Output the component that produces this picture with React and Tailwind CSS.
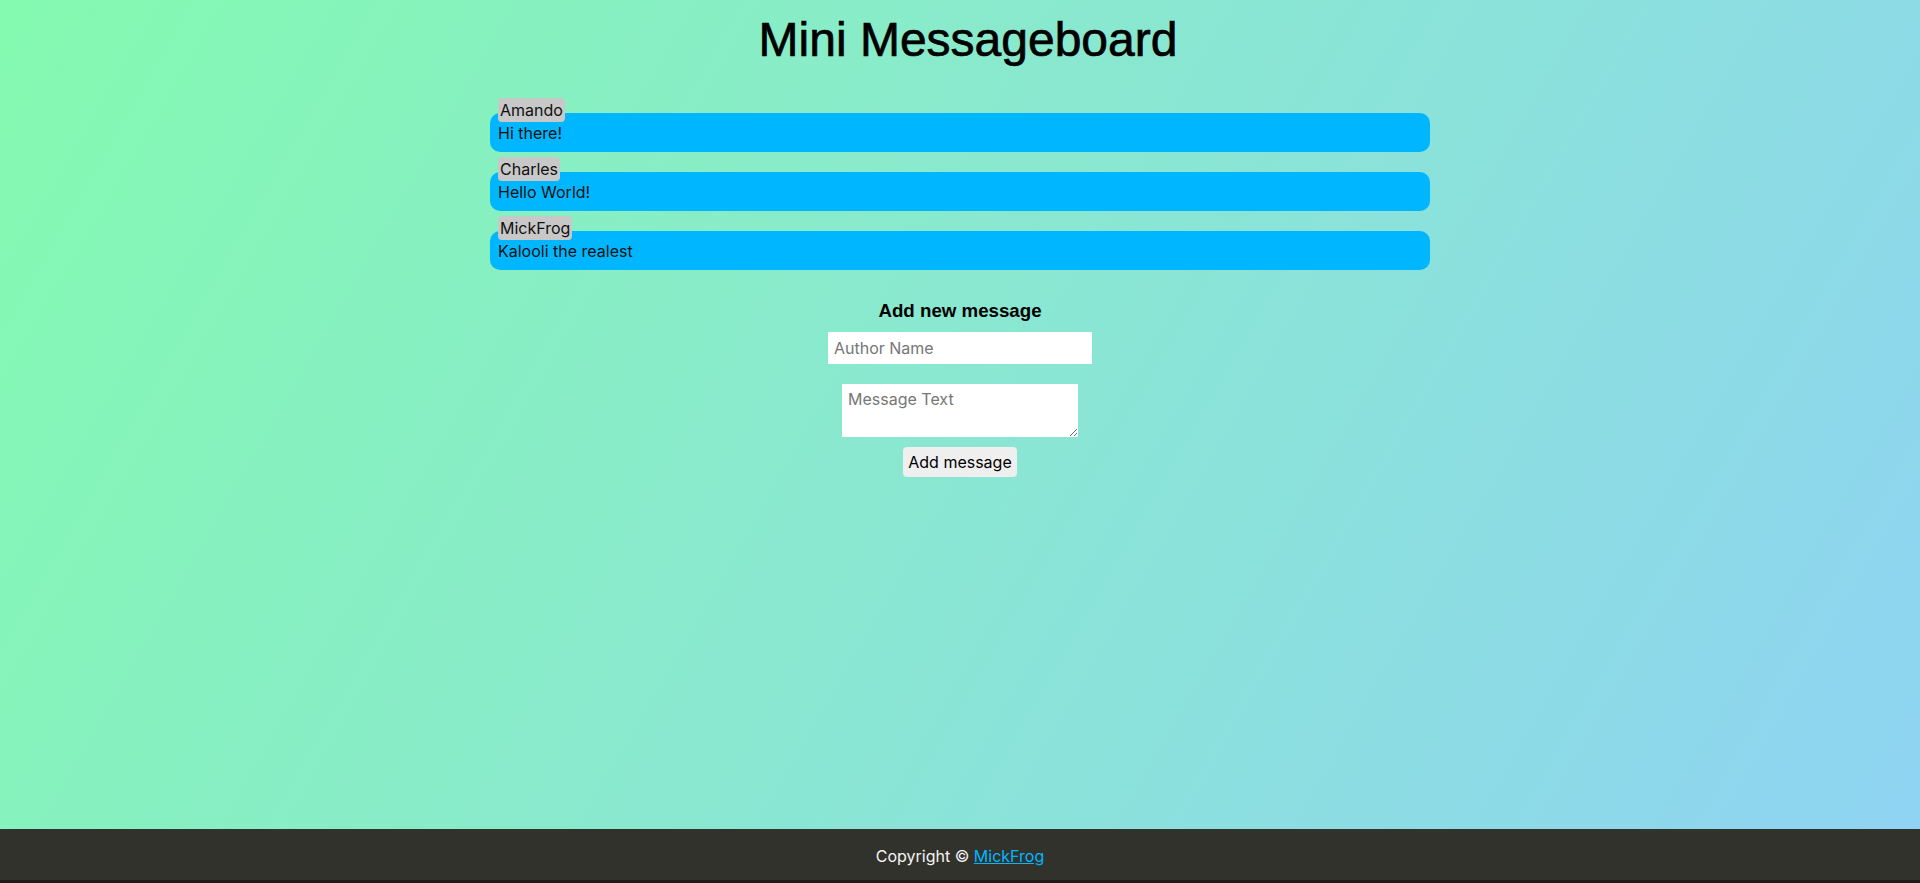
import React, { useState } from "react";

const initialMessages = [
  { user: "Amando", text: "Hi there!" },
  { user: "Charles", text: "Hello World!" },
  { user: "MickFrog", text: "Kalooli the realest" },
];

function Message({ user, text }) {
  return (
    <div className="flex flex-col items-start">
      <span className="relative z-10 ml-2 h-6 px-[2px] leading-6 rounded bg-[#c8c8c8] text-[#111]">
        {user}
      </span>
      <div className="w-full -mt-[9px] pt-[8px] pb-[7px] pl-2 rounded-[10px] bg-[#00b7ff] leading-6 text-[#111]">
        {text}
      </div>
    </div>
  );
}

export default function App() {
  const [messages] = useState(initialMessages);

  return (
    <div className="min-h-[883px] flex flex-col font-['Inter',sans-serif] text-base text-black bg-[linear-gradient(120deg,#84fab0_0%,#8fd3f4_100%)]">
      <main className="flex-1 flex flex-col items-center">
        <h1 className="pt-4 ml-4 font-['Liberation_Sans',Arial,sans-serif] text-[48px] leading-[48px] font-normal [-webkit-text-stroke:0.7px_black]">
          Mini Messageboard
        </h1>

        {/* Messages */}
        <div className="mt-[34px] w-[940px] flex flex-col gap-[5px]">
          {messages.map((m) => (
            <Message key={m.user} user={m.user} text={m.text} />
          ))}
        </div>

        {/* New message form */}
        <form className="mt-[30px] flex flex-col items-center" onSubmit={(e) => e.preventDefault()}>
          <h3 className="font-['Liberation_Sans',Arial,sans-serif] text-[18.72px] leading-[22px] font-bold">
            Add new message
          </h3>
          <input
            type="text"
            placeholder="Author Name"
            className="mt-[10px] w-[264px] h-8 px-[6px] bg-white outline-none placeholder:text-[#767676]"
          />
          <textarea
            placeholder="Message Text"
            className="mt-5 w-[236px] h-[53px] px-[6px] pt-[3px] bg-white outline-none placeholder:text-[#767676]"
          />
          <button
            type="submit"
            className="mt-[10px] w-[114px] h-[30px] rounded bg-[#efefef] text-black"
          >
            Add message
          </button>
        </form>
      </main>

      <footer className="h-[51px] flex items-center justify-center bg-[#32322c] text-[#f5f5f5] pt-[2px]">
        <p>
          Copyright © <a href="#" className="text-[#00b7ff] underline">MickFrog</a>
        </p>
      </footer>
      <div className="h-[3px] bg-[#1c1c1a]"></div>
    </div>
  );
}
